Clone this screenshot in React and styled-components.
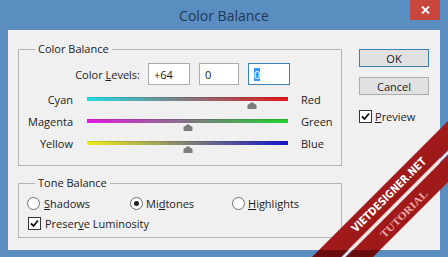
import React from 'react'
import styled, { createGlobalStyle } from 'styled-components'

const GlobalStyle = createGlobalStyle`
  html, body { margin: 0; padding: 0; }
  body {
    background: #5b8ec0;
    font-family: "Open Sans", "Noto Sans", sans-serif;
    font-size: 11px;
    color: #1b1b1b;
  }
`

const Frame = styled.div`
  position: relative;
  width: 448px;
  height: 257px;
  box-sizing: border-box;
  padding: 0 8px 7px;
  background: #5b8ec0;
  display: flex;
  flex-direction: column;
  overflow: hidden;
`

const TitleBar = styled.div`
  position: relative;
  height: 30px;
  display: flex;
  align-items: center;
  justify-content: center;
  font-size: 14px;
  color: #1d3756;
`

const CloseButton = styled.div`
  position: absolute;
  top: 0;
  right: 0;
  width: 30px;
  height: 20px;
  background: #c9463d;
  display: flex;
  align-items: center;
  justify-content: center;
`

const Body = styled.div`
  flex: 1;
  background: #f0f0f0;
  display: flex;
  gap: 17px;
  padding: 19px 11px 0 10px;
`

const LeftColumn = styled.div`
  width: 324px;
  display: flex;
  flex-direction: column;
  gap: 17px;
`

const Group = styled.div`
  position: relative;
  box-sizing: border-box;
  height: ${p => p.$height}px;
  border: 1px solid #b4b4b4;
  display: flex;
  flex-direction: column;
  padding-top: 13px;
`

const Legend = styled.div`
  position: absolute;
  top: -9px;
  left: 16px;
  padding: 0 3px;
  background: #f0f0f0;
  line-height: 16px;
`

const LevelsRow = styled.div`
  display: flex;
  justify-content: flex-end;
  align-items: center;
  gap: 9px;
  padding-right: 51px;
  height: 22px;
`

const LevelsLabel = styled.span`
  margin-right: -1px;
`

const Field = styled.div`
  box-sizing: border-box;
  width: ${p => p.$w}px;
  height: 22px;
  background: #fff;
  border: 1px solid ${p => (p.$focused ? '#3c7fb1' : '#abadb3')};
  display: flex;
  align-items: center;
  padding-left: 5px;
`

const Selected = styled.span`
  background: #3399ff;
  color: #fff;
  line-height: 13px;
`

const Sliders = styled.div`
  margin-top: 8px;
  display: flex;
  flex-direction: column;
`

const SliderRow = styled.div`
  display: grid;
  grid-template-columns: 54px 201px auto;
  column-gap: 14px;
  height: 22px;
  align-items: start;
  line-height: 14px;
`

const SideLabel = styled.span`
  text-align: ${p => p.$align};
  ${p => (p.$align === 'left' ? 'margin-left: -1px;' : '')}
`

const TrackWrap = styled.div`
  position: relative;
  padding-top: 4px;
`

const Track = styled.div`
  height: 4px;
  background: linear-gradient(to right, ${p => p.$from}, ${p => p.$to});
  box-shadow: inset 0 1px 0 rgba(0, 0, 0, 0.12);
`

const Thumb = styled.svg`
  position: absolute;
  top: 9px;
  margin-left: -5px;
`

const RadioRow = styled.div`
  display: grid;
  grid-template-columns: 103px 102px auto;
  padding-left: 8px;
  height: 13px;
  align-items: center;
`

const Choice = styled.label`
  display: flex;
  align-items: center;
  gap: ${p => p.$gap || 4}px;
  line-height: 13px;
`

const RadioCircle = styled.span`
  box-sizing: border-box;
  width: 13px;
  height: 13px;
  border-radius: 50%;
  border: 1px solid #6f6f6f;
  background: #fff;
  display: flex;
  align-items: center;
  justify-content: center;
  &::after {
    content: '';
    width: 5px;
    height: 5px;
    border-radius: 50%;
    background: ${p => (p.$on ? '#1e1e1e' : 'transparent')};
  }
`

const CheckBox = styled.span`
  box-sizing: border-box;
  width: 13px;
  height: 13px;
  border: 1px solid #333;
  background: #fff;
  display: flex;
  align-items: center;
  justify-content: center;
`

const CheckRow = styled.div`
  margin-top: 7px;
  padding-left: 9px;
`

const ButtonColumn = styled.div`
  width: 70px;
  display: flex;
  flex-direction: column;
`

const Button = styled.div`
  box-sizing: border-box;
  height: 18px;
  margin-bottom: ${p => p.$mb}px;
  background: #e1e1e1;
  border: 1px solid ${p => (p.$default ? '#3c7fb1' : '#adadad')};
  display: flex;
  align-items: center;
  justify-content: center;
`

const Key = styled.span`
  text-decoration: underline;
  text-underline-offset: 1px;
`

const Ribbon = styled.svg`
  position: absolute;
  inset: 0;
  pointer-events: none;
`

const sliders = [
  { left: 'Cyan', right: 'Red', from: '#22dde4', to: '#e4151a', value: 64 },
  { left: 'Magenta', right: 'Green', from: '#e21be0', to: '#1fd22c', value: 0 },
  { left: 'Yellow', right: 'Blue', from: '#eeee1c', to: '#1414cc', value: 0 },
]

const Check = () => (
  <svg width="9" height="9" viewBox="0 0 9 9">
    <path d="M1 4.5 L3.5 7 L8 1.5" fill="none" stroke="#111" strokeWidth="1.8" />
  </svg>
)

const band = (a, b) => `${a - 300},300 500,${a - 500} 500,${b - 500} ${b - 300},300`

export default function App() {
  return (
    <>
      <GlobalStyle />
      <Frame>
        <TitleBar>
          Color Balance
          <CloseButton>
            <svg width="9" height="8" viewBox="0 0 9 8">
              <path d="M1 0.5 L8 7.5 M8 0.5 L1 7.5" stroke="#fff" strokeWidth="1.8" />
            </svg>
          </CloseButton>
        </TitleBar>
        <Body>
          <LeftColumn>
            <Group $height={117}>
              <Legend>Color Balance</Legend>
              <LevelsRow>
                <LevelsLabel>Color <Key>L</Key>evels:</LevelsLabel>
                <Field $w={42}>+64</Field>
                <Field $w={40}>0</Field>
                <Field $w={42} $focused><Selected>0</Selected></Field>
              </LevelsRow>
              <Sliders>
                {sliders.map(s => (
                  <SliderRow key={s.left}>
                    <SideLabel $align="right">{s.left}</SideLabel>
                    <TrackWrap>
                      <Track $from={s.from} $to={s.to} />
                      <Thumb width="10" height="7" viewBox="0 0 10 7" style={{ left: `${50 + s.value / 2}%` }}>
                        <path d="M5 0 L9.5 3 V7 H0.5 V3 Z" fill="#7d7d7d" />
                      </Thumb>
                    </TrackWrap>
                    <SideLabel $align="left">{s.right}</SideLabel>
                  </SliderRow>
                ))}
              </Sliders>
            </Group>
            <Group $height={55}>
              <Legend>Tone Balance</Legend>
              <RadioRow>
                <Choice><RadioCircle /><span><Key>S</Key>hadows</span></Choice>
                <Choice $gap={3}><RadioCircle $on /><span>Mi<Key>d</Key>tones</span></Choice>
                <Choice $gap={3}><RadioCircle /><span><Key>H</Key>ighlights</span></Choice>
              </RadioRow>
              <CheckRow>
                <Choice><CheckBox><Check /></CheckBox><span>Preser<Key>v</Key>e Luminosity</span></Choice>
              </CheckRow>
            </Group>
          </LeftColumn>
          <ButtonColumn>
            <Button $default $mb={10}>OK</Button>
            <Button $mb={15}>Cancel</Button>
            <Choice $gap={3}><CheckBox><Check /></CheckBox><span><Key>P</Key>review</span></Choice>
          </ButtonColumn>
        </Body>
        <Ribbon width="448" height="257" viewBox="0 0 448 257">
          <defs>
            <linearGradient id="rb" x1="0" y1="0" x2="1" y2="1">
              <stop offset="0" stopColor="#b21f1f" />
              <stop offset="1" stopColor="#8f1515" />
            </linearGradient>
            <clipPath id="bands">
              <polygon points={band(569, 598)} />
              <polygon points={band(603, 630)} />
            </clipPath>
          </defs>
          <polygon points={band(569, 598)} fill="url(#rb)" />
          <polygon points={band(603, 630)} fill="url(#rb)" />
          <line x1="300.5" y1="300" x2="500.5" y2="100" stroke="#f4e4e4" strokeWidth="2.2" />
          <rect x="0" y="250" width="448" height="7" fill="rgba(40,0,0,0.45)" clipPath="url(#bands)" />
          <text
            transform="translate(389 195) rotate(-45)"
            textAnchor="middle"
            dominantBaseline="central"
            fontFamily="'DejaVu Sans Condensed', 'DejaVu Sans', sans-serif"
            fontWeight="700"
            fontSize="11"
            fill="#ffffff"
            textLength="100"
            lengthAdjust="spacingAndGlyphs"
          >
            VIETDESIGNER.NET
          </text>
          <text
            transform="translate(404 214) rotate(-45)"
            textAnchor="middle"
            dominantBaseline="central"
            fontFamily="'Liberation Serif', serif"
            fontWeight="700"
            fontSize="10.5"
            fill="#eba8a8"
            textLength="62"
            lengthAdjust="spacingAndGlyphs"
          >
            TUTORIAL
          </text>
        </Ribbon>
      </Frame>
    </>
  )
}
